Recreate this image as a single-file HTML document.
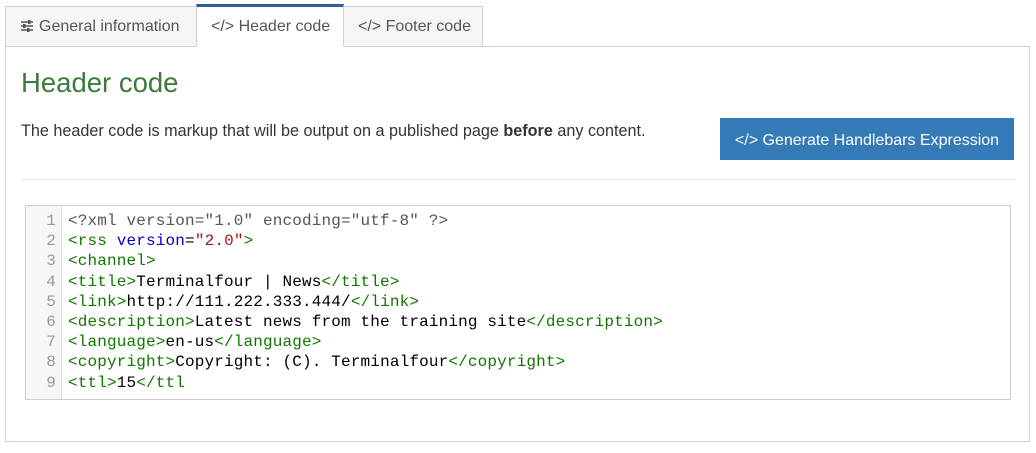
<!DOCTYPE html>
<html><head><style>
*{box-sizing:border-box;margin:0;padding:0}
body{width:1036px;height:453px;background:#fff;font-family:"Liberation Sans",sans-serif;color:#333;position:relative;overflow:hidden}
.tab{position:absolute;top:6px;height:41px;border:1px solid #ccd3dc;background:#f5f5f5;font-size:16px;color:#555;line-height:40px;padding-left:14px}
.tab.act{background:#fff;border-top:3px solid #2e5f8e;border-bottom:1px solid #fff;top:4px;height:43px;z-index:2}
.panel{position:absolute;left:5px;top:46px;width:1025px;height:396px;border:1px solid #ccd3dc}
h1{position:absolute;left:21px;top:67px;font-size:27.5px;font-weight:normal;color:#3d7a3d}
.desc{position:absolute;left:21px;top:122px;font-size:16.2px;color:#333}
.btn{position:absolute;left:720px;top:118px;width:294px;height:42px;background:#337ab7;color:#fff;font-size:16px;line-height:45px;text-align:center}
.hr{position:absolute;left:21px;top:179px;width:993px;border-top:1px solid #e5e5e5}
.code{position:absolute;left:25px;top:205px;width:986px;height:195px;border:1px solid #ccc;font-family:"Liberation Mono",monospace;font-size:16px;letter-spacing:.15px;line-height:20.2px}
.gut{position:absolute;left:0;top:0;width:36px;height:100%;background:#f7f7f7;border-right:1px solid #ddd;color:#999;text-align:right;padding:5px 5px 0 0}
.lines{position:absolute;left:42px;top:5px;white-space:pre;color:#000}
.t{color:#170}.a{color:#00c}.s{color:#a11}.m{color:#555}
</style></head><body>
<div class="tab" style="left:5px;width:192px"><svg width="14" height="12" viewBox="0 0 14 12" style="margin-right:5px;vertical-align:-1px"><g stroke="#555" stroke-width="1.5"><path d="M1 2h12M1 6h12M1 10h12"/></g><g fill="#555"><rect x="8" y="0" width="2.5" height="4"/><rect x="3" y="4" width="2.5" height="4"/><rect x="7" y="8" width="2.5" height="4"/></g></svg>General information</div>
<div class="tab act" style="left:196px;width:148px">&lt;/&gt; Header code</div>
<div class="tab" style="left:343px;width:140px">&lt;/&gt; Footer code</div>
<div class="panel"></div>
<h1>Header code</h1>
<div class="desc">The header code is markup that will be output on a published page <b>before</b> any content.</div>
<div class="btn">&lt;/&gt; Generate Handlebars Expression</div>
<div class="hr"></div>
<div class="code">
<div class="gut">1<br>2<br>3<br>4<br>5<br>6<br>7<br>8<br>9</div>
<div class="lines"><span class="m">&lt;?xml version="1.0" encoding="utf-8" ?&gt;</span>
<span class="t">&lt;rss</span> <span class="a">version</span>=<span class="s">"2.0"</span><span class="t">&gt;</span>
<span class="t">&lt;channel&gt;</span>
<span class="t">&lt;title&gt;</span>Terminalfour | News<span class="t">&lt;/title&gt;</span>
<span class="t">&lt;link&gt;</span>http://111.222.333.444/<span class="t">&lt;/link&gt;</span>
<span class="t">&lt;description&gt;</span>Latest news from the training site<span class="t">&lt;/description&gt;</span>
<span class="t">&lt;language&gt;</span>en-us<span class="t">&lt;/language&gt;</span>
<span class="t">&lt;copyright&gt;</span>Copyright: (C). Terminalfour<span class="t">&lt;/copyright&gt;</span>
<span class="t">&lt;ttl&gt;</span>15<span class="t">&lt;/ttl</span></div>
</div>
</body></html>
